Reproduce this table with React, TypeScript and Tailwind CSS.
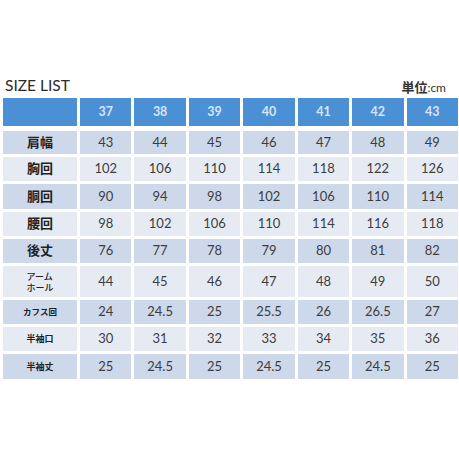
const sizes = ["37", "38", "39", "40", "41", "42", "43"];

type Row = { label: React.ReactNode; h: string; values: string[] };

const rows: Row[] = [
  { label: <span className="text-[13px] font-bold">肩幅</span>, h: "h-[23px]", values: ["43", "44", "45", "46", "47", "48", "49"] },
  { label: <span className="text-[13px] font-bold">胸回</span>, h: "h-[24px]", values: ["102", "106", "110", "114", "118", "122", "126"] },
  { label: <span className="text-[13px] font-bold">胴回</span>, h: "h-[25px]", values: ["90", "94", "98", "102", "106", "110", "114"] },
  { label: <span className="text-[13px] font-bold">腰回</span>, h: "h-[24px]", values: ["98", "102", "106", "110", "114", "116", "118"] },
  { label: <span className="text-[13px] font-bold">後丈</span>, h: "h-[24px]", values: ["76", "77", "78", "79", "80", "81", "82"] },
  {
    label: (
      <span className="inline-block text-[9px] leading-[11px] text-left font-medium">
        アーム
        <br />
        ホール
      </span>
    ),
    h: "h-[31px]",
    values: ["44", "45", "46", "47", "48", "49", "50"],
  },
  { label: <span className="text-[8.5px] font-bold">カフス回</span>, h: "h-[24px]", values: ["24", "24.5", "25", "25.5", "26", "26.5", "27"] },
  { label: <span className="text-[9px] font-bold">半袖口</span>, h: "h-[24px]", values: ["30", "31", "32", "33", "34", "35", "36"] },
  { label: <span className="text-[9px] font-bold">半袖丈</span>, h: "h-[25px]", values: ["25", "24.5", "25", "24.5", "25", "24.5", "25"] },
];

const App = () => {
  return (
    <div
      className="w-[459px] h-[459px] bg-white pt-[74px] pl-[3px] text-[#333]"
      style={{ fontFamily: "Lato, 'Noto Sans CJK JP', sans-serif" }}
    >
      <div className="flex items-end justify-between h-[24px] pb-[5px] pr-[13px] pl-[2px]">
        <span className="text-[15.5px] leading-none text-[#2b2b2b]">SIZE LIST</span>
        <span className="text-[12px] leading-none mb-[-1px]">
          <span className="font-bold text-[13px]">単位</span>:cm
        </span>
      </div>

      <div className="w-[455px] grid grid-cols-[74px_repeat(7,1fr)] gap-x-[3px]">
        <div className="h-[28px] bg-[#4b8fd5]" />
        {sizes.map((s) => (
          <div key={s} className="h-[28px] bg-[#4b8fd5] flex items-center justify-center text-[12.5px] font-bold text-[#d6e6f7]">
            {s}
          </div>
        ))}
      </div>

      <div className="w-[455px] mt-[5px] flex flex-col gap-y-[3px]">
        {rows.map((r, i) => {
          const bg = i % 2 === 0 ? "bg-[#cdd8ea]" : "bg-[#e6ebf3]";
          return (
            <div key={i} className="grid grid-cols-[74px_repeat(7,1fr)] gap-x-[3px]">
              <div className={`${r.h} ${bg} w-full flex items-center justify-center text-center text-[#222]`}>{r.label}</div>
              {r.values.map((v, j) => (
                <div key={j} className={`${r.h} ${bg} flex items-center justify-center text-[13px] text-[#3d3d3d]`}>
                  {v}
                </div>
              ))}
            </div>
          );
        })}
      </div>
    </div>
  );
};

export default App;
